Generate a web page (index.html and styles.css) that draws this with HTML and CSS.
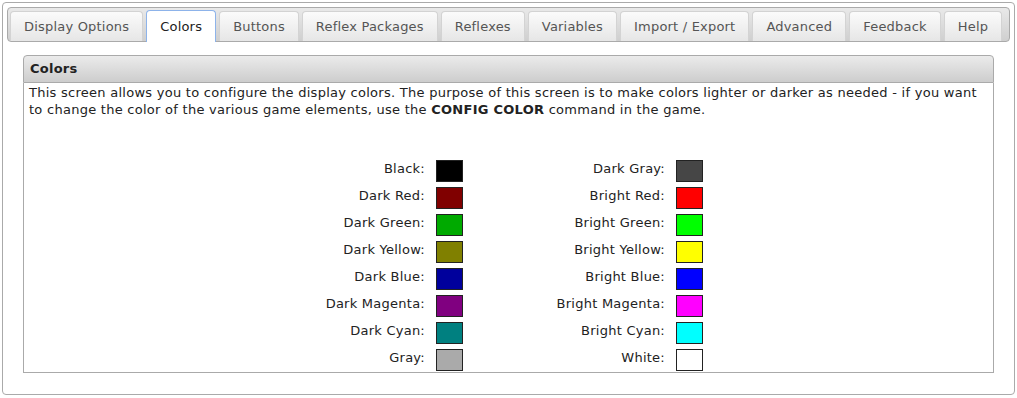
FILE: index.html
```html
<!DOCTYPE html>
<html>
<head>
<meta charset="utf-8">
<link rel="stylesheet" href="styles.css">
</head>
<body>
<div class="tabs">
  <ul class="nav">
    <li class="tab">Display Options</li>
    <li class="tab active">Colors</li>
    <li class="tab">Buttons</li>
    <li class="tab">Reflex Packages</li>
    <li class="tab">Reflexes</li>
    <li class="tab">Variables</li>
    <li class="tab">Import / Export</li>
    <li class="tab">Advanced</li>
    <li class="tab">Feedback</li>
    <li class="tab">Help</li>
  </ul>
  <div class="panel">
    <div class="box">
      <div class="box-header">Colors</div>
      <div class="box-body">
        <p class="intro">This screen allows you to configure the display colors. The purpose of this screen is to make colors lighter or darker as needed - if you want to change the color of the various game elements, use the <b>CONFIG COLOR</b> command in the game.</p>
        <div class="grid">
          <span class="label">Black:</span><span class="sw c-black"></span>
          <span class="label">Dark Gray:</span><span class="sw c-dgray"></span>
          <span class="label">Dark Red:</span><span class="sw c-dred"></span>
          <span class="label">Bright Red:</span><span class="sw c-bred"></span>
          <span class="label">Dark Green:</span><span class="sw c-dgreen"></span>
          <span class="label">Bright Green:</span><span class="sw c-bgreen"></span>
          <span class="label">Dark Yellow:</span><span class="sw c-dyellow"></span>
          <span class="label">Bright Yellow:</span><span class="sw c-byellow"></span>
          <span class="label">Dark Blue:</span><span class="sw c-dblue"></span>
          <span class="label">Bright Blue:</span><span class="sw c-bblue"></span>
          <span class="label">Dark Magenta:</span><span class="sw c-dmagenta"></span>
          <span class="label">Bright Magenta:</span><span class="sw c-bmagenta"></span>
          <span class="label">Dark Cyan:</span><span class="sw c-dcyan"></span>
          <span class="label">Bright Cyan:</span><span class="sw c-bcyan"></span>
          <span class="label">Gray:</span><span class="sw c-gray"></span>
          <span class="label">White:</span><span class="sw c-white"></span>
        </div>
      </div>
    </div>
  </div>
</div>
</body>
</html>
```
FILE: styles.css
```css
html, body {
  margin: 0;
  background: #fff;
}
body {
  padding: 2px;
  font-family: "DejaVu Sans", Verdana, sans-serif;
  font-size: 13px;
  line-height: 17px;
  letter-spacing: 0.25px;
  color: #222;
}
.tabs {
  border: 1px solid #aaa;
  border-radius: 4px;
  padding: 4px;
}
.nav {
  list-style: none;
  margin: 0;
  display: flex;
  gap: 3px;
  padding: 3px 2px 0;
  height: 30px;
  border: 1px solid #aaa;
  border-radius: 4px;
  background: linear-gradient(#e9e9e9, #cfcfcf);
}
.tab {
  box-sizing: border-box;
  height: 30px;
  padding: 6px 13px 0;
  border: 1px solid #d3d3d3;
  border-bottom: 0;
  border-radius: 4px 4px 0 0;
  background: linear-gradient(#fbfbfb, #e6e6e6);
  color: #555;
  letter-spacing: 0.2px;
  white-space: nowrap;
}
.tab.active {
  height: 32px;
  margin-top: -1px;
  padding-top: 7px;
  border: 1px solid #8db3ea;
  border-bottom: 0;
  background: #fff;
  color: #212121;
}
.panel {
  padding: 13px 16px 17px 16px;
}
.box-header {
  height: 26px;
  line-height: 26px;
  padding: 0 6px;
  font-weight: bold;
  color: #222;
  border: 1px solid #aaa;
  border-radius: 4px 4px 0 0;
  background: linear-gradient(#ebebeb, #cdcdcd);
}
.box-body {
  border: 1px solid #aaa;
  border-top: 0;
  padding: 1px 5px 1px;
}
.intro {
  margin: 0;
  letter-spacing: 0.265px;
}
.grid {
  display: grid;
  grid-template-columns: 213px 27px 213px 27px;
  row-gap: 5px;
  margin: 42px 0 0 194px;
}
.label {
  text-align: right;
  padding-right: 11px;
  line-height: 17px;
}
.sw {
  box-sizing: border-box;
  width: 27px;
  height: 22px;
  border: 1px solid #222;
}
.c-black { background: #000000; }
.c-dgray { background: #464646; }
.c-dred { background: #800000; }
.c-bred { background: #ff0000; }
.c-dgreen { background: #00aa00; }
.c-bgreen { background: #00ff00; }
.c-dyellow { background: #808000; }
.c-byellow { background: #ffff00; }
.c-dblue { background: #00009c; }
.c-bblue { background: #0000ff; }
.c-dmagenta { background: #800080; }
.c-bmagenta { background: #ff00ff; }
.c-dcyan { background: #008080; }
.c-bcyan { background: #00ffff; }
.c-gray { background: #aaaaaa; }
.c-white { background: #ffffff; }
```
